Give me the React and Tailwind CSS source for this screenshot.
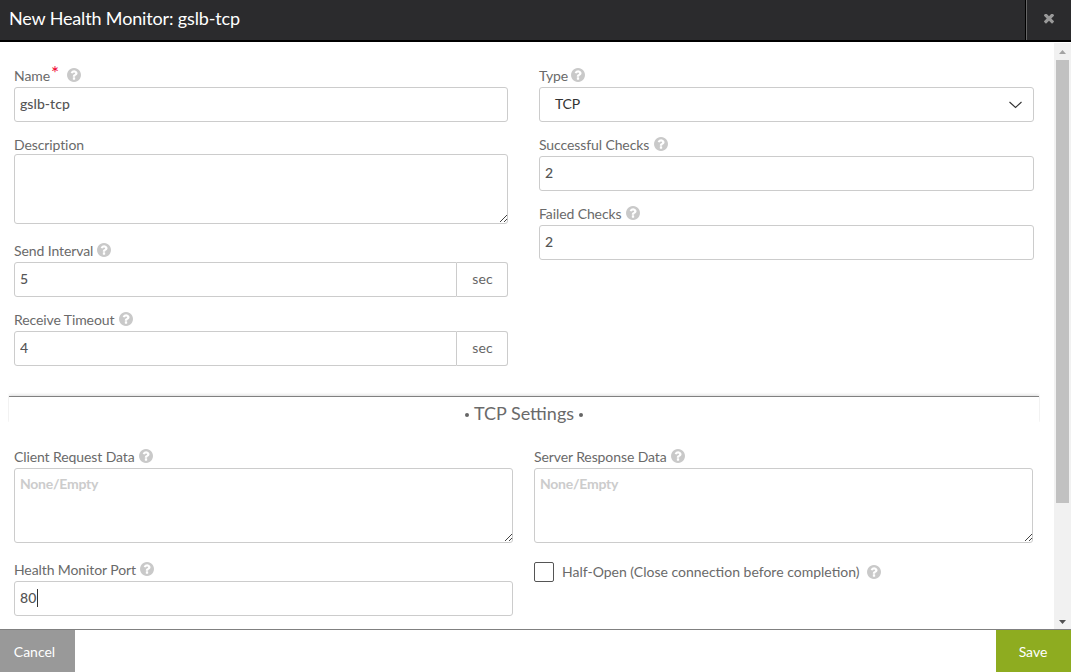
import React from "react";

function Help({ className = "" }) {
  return (
    <svg viewBox="128 128 1536 1536" className={"block size-3.5 shrink-0 fill-[#c9c9c9] " + className}>
      <path d="M1024 1376v-192q0-14-9-23t-23-9h-192q-14 0-23 9t-9 23v192q0 14 9 23t23 9h192q14 0 23-9t9-23zm256-672q0-88-55.5-163t-138.5-116-170-41q-243 0-371 213-15 24 8 42l132 100q7 6 19 6 16 0 25-12 53-68 86-92 34-24 86-24 48 0 85.5 26t37.5 59q0 38-20 61t-68 45q-63 28-115.5 86.5t-52.5 125.5v36q0 14 9 23t23 9h192q14 0 23-9t9-23q0-19 21.5-49.5t54.5-49.5q32-18 49-28.5t46-35 44.5-48 28-60.5 12.5-81zm384 192q0 209-103 385.5t-279.5 279.5-385.5 103-385.5-103-279.5-279.5-103-385.5 103-385.5 279.5-279.5 385.5-103 385.5 103 279.5 279.5 103 385.5z" />
    </svg>
  );
}

function Label({ text, width, required, help = true, className = "h-[19px]" }) {
  return (
    <div className={"flex items-start text-[#6a6a6a] " + className}>
      <span className={"whitespace-nowrap leading-[15px] tracking-[-0.1px] " + width}>{text}</span>
      {required && <span className="-mt-[5px] ml-px w-4 text-[19px] leading-[19px] text-[#f00030]">*</span>}
      {help && <Help className={required ? "" : "ml-1"} />}
    </div>
  );
}

const box = "block rounded-[3px] border border-[#ccc] bg-white px-[5px] font-medium text-[#555] outline-none ";

function Input({ value, className = "w-full" }) {
  return <input defaultValue={value} className={box + "h-[35px] pb-0.5 tracking-[0.05px] " + className} />;
}

function Area({ height, placeholder }) {
  return (
    <div className="relative">
      <textarea
        placeholder={placeholder}
        className={box + "w-full resize-none pt-[5px] tracking-[-0.25px] placeholder:font-bold placeholder:text-[#ccc] " + height}
      />
      <svg viewBox="0 0 9 9" className="absolute right-0 bottom-px size-[9px]" shapeRendering="crispEdges">
        <path d="M1 8 8 1M5 8 8 5" stroke="#444" strokeWidth="1" fill="none" />
      </svg>
    </div>
  );
}

function Seconds({ value }) {
  return (
    <div className="flex">
      <Input value={value} className="w-[443px] rounded-r-none" />
      <span className="flex h-[35px] w-[51px] items-center justify-center rounded-r-[3px] border border-l-0 border-[#ccc] pb-0.5 pl-px tracking-[0.2px] text-[#666]">
        sec
      </span>
    </div>
  );
}

export default function App() {
  return (
    <div className="flex h-[672px] w-[1071px] flex-col overflow-hidden bg-white font-['Lato',sans-serif] text-sm">
      <header className="flex h-[42px] shrink-0 border-b-2 border-black bg-[#2b2b2d]">
        <h1 className="flex-1 pt-[6px] pl-[9px] text-lg leading-6 tracking-[-0.15px] text-white">New Health Monitor: gslb-tcp</h1>
        <button className="flex w-[46px] border-l border-black">
          <span className="flex h-full w-full border-l border-[#666] pt-[13px] pl-[16px]">
            <svg viewBox="302 430 1188 1188" className="mt-px ml-px size-[10px] fill-[#999]">
              <path d="M1490 1322q0 40-28 68l-136 136q-28 28-68 28t-68-28l-294-294-294 294q-28 28-68 28t-68-28l-136-136q-28-28-28-68t28-68l294-294-294-294q-28-28-28-68t28-68l136-136q28-28 68-28t68 28l294 294 294-294q28-28 68-28t68 28l136 136q28 28 28 68t-28 68l-294 294 294 294q28 28 28 68z" />
            </svg>
          </span>
        </button>
      </header>

      <div className="flex h-[587px] shrink-0">
        <main className="w-[1054px]">
          <section className="flex gap-[31px] pt-[26px] pl-[14px]">
            <div className="w-[494px]">
              <Label text="Name" width="w-[36px]" required />
              <Input value="gslb-tcp" />
              <Label text="Description" width="w-[70px]" help={false} className="mt-[15px] h-[17px]" />
              <Area height="h-[70px]" />
              <Label text="Send Interval" width="w-[79px]" className="mt-[19px] h-[19px]" />
              <Seconds value="5" />
              <Label text="Receive Timeout" width="w-[101px]" className="mt-[15px] h-[19px]" />
              <Seconds value="4" />
            </div>
            <div className="w-[495px]">
              <Label text="Type" width="w-[28px]" />
              <div className="flex h-[35px] items-center justify-between rounded-[3px] border border-[#ccc] pr-[11px] pb-0.5 pl-[15px] text-[#333]">
                <span className="tracking-[-0.2px]">TCP</span>
                <svg viewBox="0 0 13 8" className="mt-0.5 h-2 w-[13px]">
                  <path d="M.5 1 6.5 6.5 12.5 1" fill="none" stroke="#333" strokeWidth="1.1" />
                </svg>
              </div>
              <Label text="Successful Checks" width="w-[111px]" className="mt-[15px] h-[19px]" />
              <Input value="2" />
              <Label text="Failed Checks" width="w-[83px]" className="mt-[15px] h-[19px]" />
              <Input value="2" />
            </div>
          </section>

          <div className="relative mt-[30px] ml-[9px] h-[27px] w-[1030px]">
            <div className="absolute inset-0 border-t border-[#808080] shadow-[0_-1px_3px_rgba(0,0,0,0.14)] [clip-path:inset(-4px_-1px_1px_-1px)]" />
            <h2 className="relative flex items-center justify-center gap-[5px] pt-[5px] text-lg leading-6 text-[#6a6a6a]">
              <span className="mt-1 size-1 rounded-full bg-[#666]" />
              <span>TCP Settings</span>
              <span className="mt-1 size-1 rounded-full bg-[#666]" />
            </h2>
          </div>

          <section className="flex gap-[21px] pt-[26px] pl-[14px]">
            <div className="w-[499px]">
              <Label text="Client Request Data" width="w-[121px]" />
              <Area height="h-[75px]" placeholder="None/Empty" />
              <Label text="Health Monitor Port" width="w-[122px]" className="mt-[19px] h-[19px]" />
              <div className="relative">
                <Input value="80" />
                <span className="absolute top-2 left-[23px] h-[18px] w-px bg-[#333]" />
              </div>
            </div>
            <div className="w-[499px]">
              <Label text="Server Response Data" width="w-[133px]" />
              <Area height="h-[75px]" placeholder="None/Empty" />
              <div className="mt-[19px] flex h-5 items-center text-[#6a6a6a]">
                <span className="size-5 rounded-xs border border-[#555]" />
                <span className="ml-2 w-[298px] whitespace-nowrap">Half-Open (Close connection before completion)</span>
                <Help className="-mt-px ml-[7px]" />
              </div>
            </div>
          </section>
        </main>

        <div className="mt-px flex w-[17px] flex-col items-center bg-[#f1f1f1]">
          <svg viewBox="0 0 17 17" className="size-[17px]">
            <path d="M5 11 8.5 7 12 11z" fill="#a3a3a3" />
          </svg>
          <div className="h-[443px] w-[13px] bg-[#c1c1c1]" />
          <svg viewBox="0 0 17 17" className="mt-auto size-[17px]">
            <path d="M5 8 12 8 8.5 12z" fill="#505050" />
          </svg>
        </div>
      </div>

      <footer className="flex h-[43px] justify-between border-t border-[#808080] text-white">
        <button className="w-[75px] bg-[#999] pt-[2px] pr-[6px]">Cancel</button>
        <button className="w-[75px] bg-[#8eac20] pt-[2px] pr-px">Save</button>
      </footer>
    </div>
  );
}
